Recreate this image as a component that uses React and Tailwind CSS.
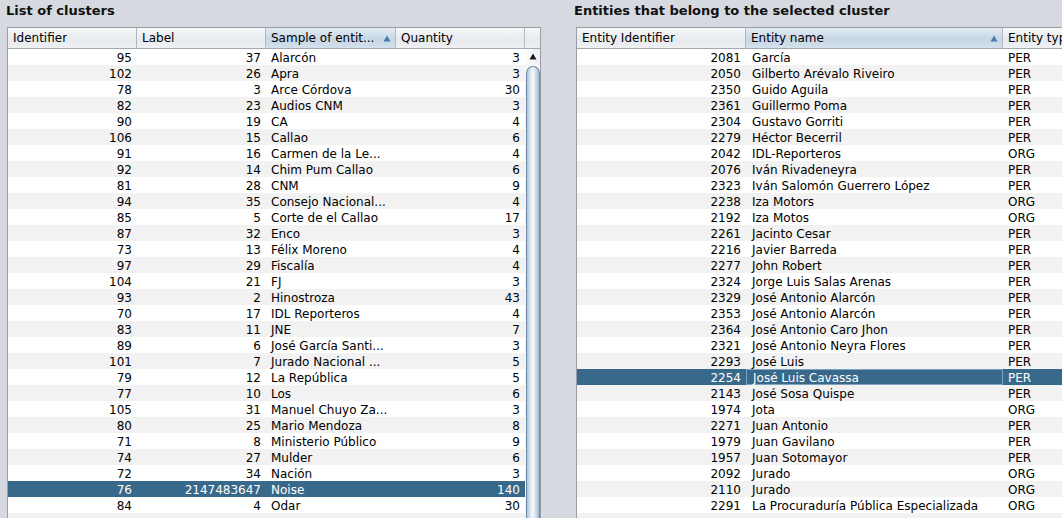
import React from "react";

const clusters = [
  ["95", "37", "Alarcón", "3"],
  ["102", "26", "Apra", "3"],
  ["78", "3", "Arce Córdova", "30"],
  ["82", "23", "Audios CNM", "3"],
  ["90", "19", "CA", "4"],
  ["106", "15", "Callao", "6"],
  ["91", "16", "Carmen de la Le...", "4"],
  ["92", "14", "Chim Pum Callao", "6"],
  ["81", "28", "CNM", "9"],
  ["94", "35", "Consejo Nacional...", "4"],
  ["85", "5", "Corte de el Callao", "17"],
  ["87", "32", "Enco", "3"],
  ["73", "13", "Félix Moreno", "4"],
  ["97", "29", "Fiscalía", "4"],
  ["104", "21", "FJ", "3"],
  ["93", "2", "Hinostroza", "43"],
  ["70", "17", "IDL Reporteros", "4"],
  ["83", "11", "JNE", "7"],
  ["89", "6", "José García Santi...", "3"],
  ["101", "7", "Jurado Nacional ...", "5"],
  ["79", "12", "La República", "5"],
  ["77", "10", "Los", "6"],
  ["105", "31", "Manuel Chuyo Za...", "3"],
  ["80", "25", "Mario Mendoza", "8"],
  ["71", "8", "Ministerio Público", "9"],
  ["74", "27", "Mulder", "6"],
  ["72", "34", "Nación", "3"],
  ["76", "2147483647", "Noise", "140"],
  ["84", "4", "Odar", "30"],
];

const entities = [
  ["2081", "García", "PER"],
  ["2050", "Gilberto Arévalo Riveiro", "PER"],
  ["2350", "Guido Aguila", "PER"],
  ["2361", "Guillermo Poma", "PER"],
  ["2304", "Gustavo Gorriti", "PER"],
  ["2279", "Héctor Becerril", "PER"],
  ["2042", "IDL-Reporteros", "ORG"],
  ["2076", "Iván Rivadeneyra", "PER"],
  ["2323", "Iván Salomón Guerrero López", "PER"],
  ["2238", "Iza Motors", "ORG"],
  ["2192", "Iza Motos", "ORG"],
  ["2261", "Jacinto Cesar", "PER"],
  ["2216", "Javier Barreda", "PER"],
  ["2277", "John Robert", "PER"],
  ["2324", "Jorge Luis Salas Arenas", "PER"],
  ["2329", "José Antonio Alarcón", "PER"],
  ["2353", "José Antonio Alarcón", "PER"],
  ["2364", "José Antonio Caro Jhon", "PER"],
  ["2321", "José Antonio Neyra Flores", "PER"],
  ["2293", "José Luis", "PER"],
  ["2254", "José Luis Cavassa", "PER"],
  ["2143", "José Sosa Quispe", "PER"],
  ["1974", "Jota", "ORG"],
  ["2271", "Juan Antonio", "PER"],
  ["1979", "Juan Gavilano", "PER"],
  ["1957", "Juan Sotomayor", "PER"],
  ["2092", "Jurado", "ORG"],
  ["2110", "Jurado", "ORG"],
  ["2291", "La Procuraduría Pública Especializada", "ORG"],
];

function SortArrow() {
  return (
    <svg width="8" height="7" viewBox="0 0 8 7" className="shrink-0">
      <path d="M4 0.5 L7.5 6.5 L0.5 6.5 Z" fill="#4a79ab" />
    </svg>
  );
}

function HeaderCell({ width, label, sorted, last }) {
  return (
    <div
      className={`flex h-[20px] shrink-0 items-center justify-between pl-[5px] pr-[4px] ${
        last ? "" : "border-r border-[#b4b9c1]"
      } ${
        sorted
          ? "bg-[linear-gradient(to_bottom,#e3ebf3,#c7d7e6_55%,#d3e0ec)]"
          : "bg-[linear-gradient(to_bottom,#f6f7f9,#e7eaee_55%,#eef0f3)]"
      }`}
      style={{ width }}
    >
      <span className="truncate whitespace-nowrap">{label}</span>
      {sorted ? <SortArrow /> : null}
    </div>
  );
}

function rowClass(index, selected) {
  if (selected) return "bg-[#39698a] text-white";
  return index % 2 === 0 ? "bg-white text-black" : "bg-[#f2f2f2] text-black";
}

function Scrollbar() {
  return (
    <div className="flex w-[15px] shrink-0 flex-col bg-[#f4f5f7]">
      <div className="flex h-[15px] shrink-0 items-center justify-center bg-[linear-gradient(to_right,#fdfdfd,#eef0f3)]">
        <svg width="8" height="7" viewBox="0 0 8 7">
          <path d="M4 0.5 L7.5 6.5 L0.5 6.5 Z" fill="#1a1a1a" />
        </svg>
      </div>
      <div className="mt-[2px] ml-[1px] flex-1 rounded-t-[7px] border border-b-0 border-[#6c8aa5] bg-[linear-gradient(to_right,#a9c3da,#dfeaf3_30%,#f7fafc_50%,#c9dbea_75%,#9fbbd3)]" />
    </div>
  );
}

export default function App() {
  return (
    <div className="flex h-[518px] w-[1062px] overflow-hidden bg-[#d6d9df] font-['DejaVu_Sans',sans-serif] text-[12px] text-black">
      <div className="flex w-[541px] shrink-0 flex-col pl-[7px]">
        <div className="-ml-[1px] flex h-[27px] shrink-0 items-start pt-[1px] text-[13px] font-bold text-[#111]">
          List of clusters
        </div>
        <div className="flex min-h-0 w-[534px] flex-1 flex-col overflow-hidden border border-b-0 border-[#9a9fa7] bg-white">
          <div className="flex shrink-0 border-b border-[#a4a9b1]">
            <HeaderCell width={129} label="Identifier" />
            <HeaderCell width={129} label="Label" />
            <HeaderCell width={130} label="Sample of entit..." sorted />
            <HeaderCell width={129} label="Quantity" />
            <HeaderCell width={15} label="" last />
          </div>
          <div className="flex min-h-0 flex-1 overflow-hidden">
            <div className="flex w-[517px] flex-col">
              {clusters.map((row, i) => (
                <div key={i} className={`flex h-[16px] shrink-0 items-center pt-[2px] ${rowClass(i, i === 27)}`}>
                  <div className="w-[129px] pr-[5px] text-right">{row[0]}</div>
                  <div className="w-[129px] pr-[5px] text-right">{row[1]}</div>
                  <div className="w-[130px] truncate whitespace-nowrap pl-[5px]">{row[2]}</div>
                  <div className="w-[129px] pr-[5px] text-right">{row[3]}</div>
                </div>
              ))}
              <div className="h-[8px] shrink-0 bg-[#f2f2f2]" />
            </div>
            <Scrollbar />
          </div>
        </div>
      </div>

      <div className="ml-[35px] flex flex-1 flex-col">
        <div className="-ml-[2px] flex h-[27px] shrink-0 items-start pt-[1px] text-[13px] font-bold text-[#111]">
          Entities that belong to the selected cluster
        </div>
        <div className="flex min-h-0 w-[560px] flex-1 flex-col overflow-hidden border border-b-0 border-r-0 border-[#9a9fa7] bg-white">
          <div className="flex shrink-0 border-b border-[#a4a9b1]">
            <HeaderCell width={169} label="Entity Identifier" />
            <HeaderCell width={257} label="Entity name" sorted />
            <HeaderCell width={133} label="Entity type" last />
          </div>
          <div className="flex min-h-0 flex-col overflow-hidden">
            {entities.map((row, i) => (
              <div key={i} className={`flex h-[16px] shrink-0 items-center ${rowClass(i, i === 20)}`}>
                <div className="w-[169px] pt-[2px] pr-[5px] text-right">{row[0]}</div>
                <div
                  className={`flex h-[16px] w-[257px] items-center whitespace-nowrap pt-[2px] pl-[6px] ${
                    i === 20 ? "border border-[#7fa3c2] pt-[1px] pl-[5px]" : ""
                  }`}
                >
                  {row[1]}
                </div>
                <div className="w-[133px] pt-[2px] pl-[5px]">{row[2]}</div>
              </div>
            ))}
            <div className="h-[8px] shrink-0 bg-[#f2f2f2]" />
          </div>
        </div>
      </div>
    </div>
  );
}
